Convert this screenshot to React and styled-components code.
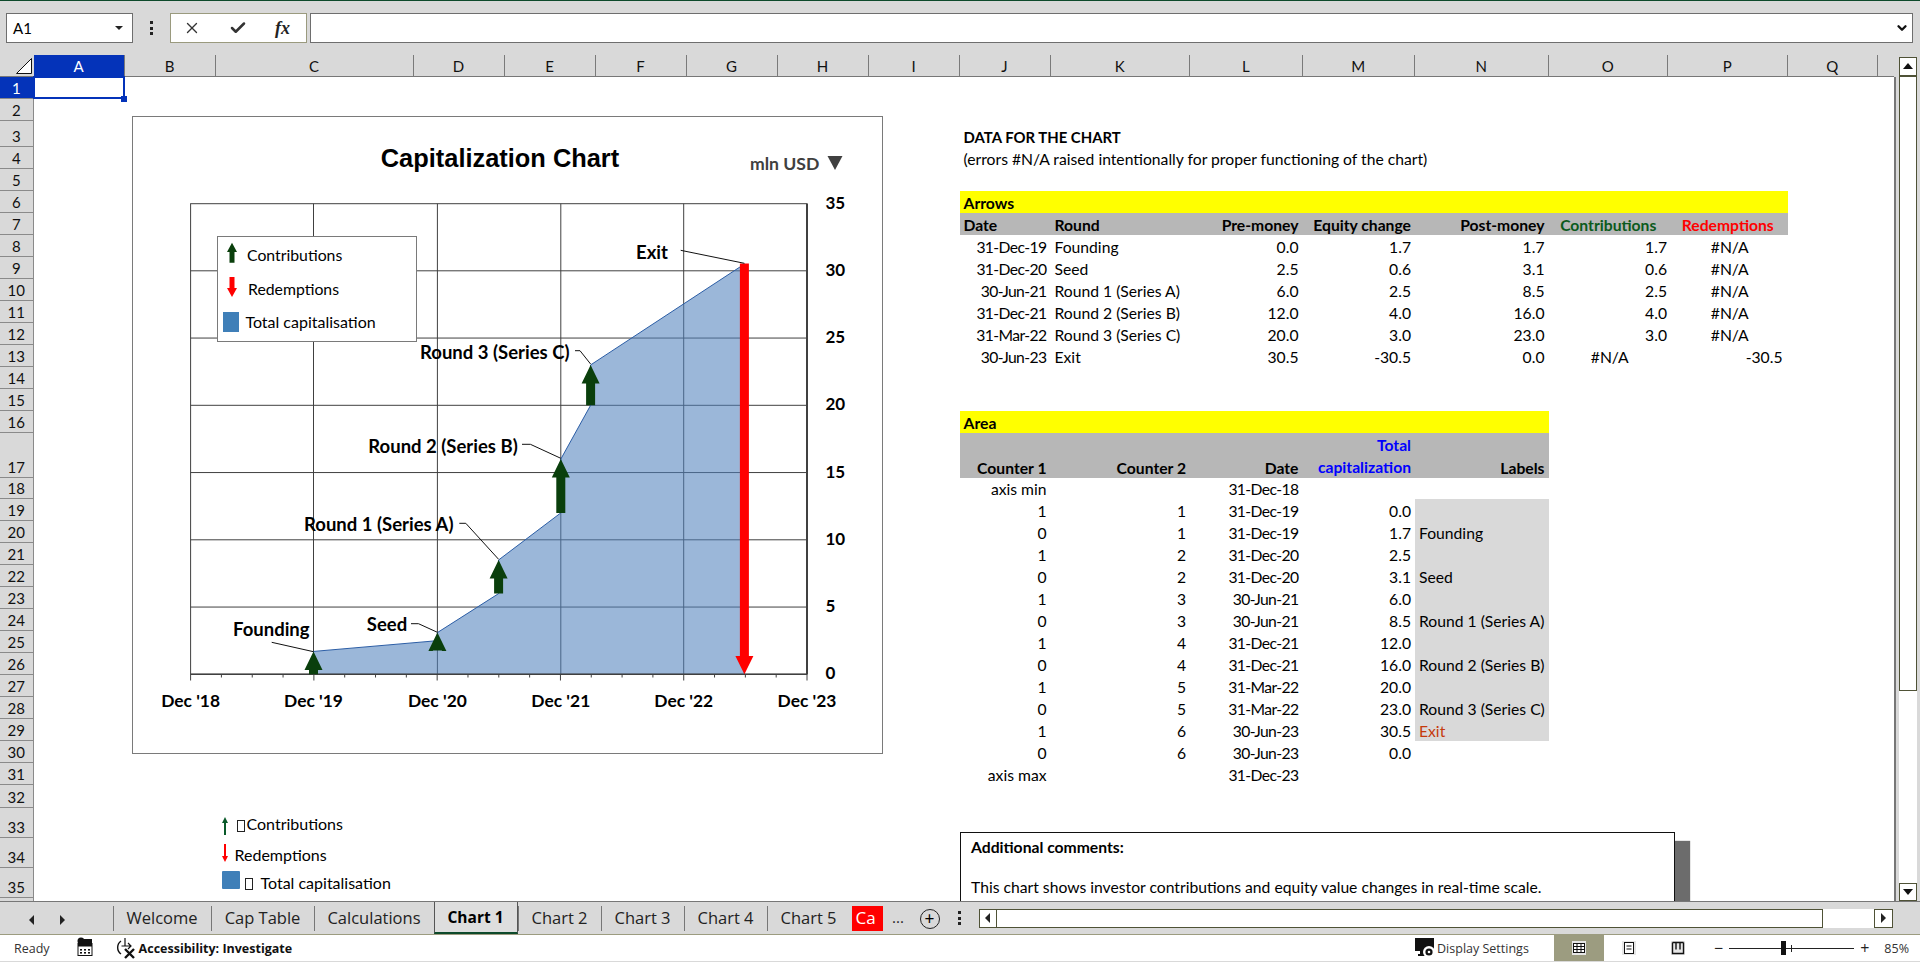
import React from 'react';
import styled, { createGlobalStyle } from 'styled-components';
import { X, Check, ChevronDown } from 'lucide-react';

const GlobalStyle = createGlobalStyle`
  html, body { margin: 0; padding: 0; height: 100%; overflow: hidden; background: #fff; }
  * { box-sizing: border-box; }
`;

const CELL_FONT = "Lato, 'Noto Sans', sans-serif";
const UI_FONT = "'Open Sans', 'Noto Sans', sans-serif";
const GREY = '#d9d9d9';
const BLUE = '#0433b9';
const OLIVE = '#4f5236';
const ARROW_GREEN = '#0a3f0c';

const COLS = [
  ['A', 91], ['B', 91], ['C', 198], ['D', 91], ['E', 91], ['F', 91], ['G', 91], ['H', 91], ['I', 91],
  ['J', 91], ['K', 139.5], ['L', 112.5], ['M', 112.5], ['N', 133.5], ['O', 119.5], ['P', 119.5], ['Q', 90.5], ['', 16.5],
];
const ROWS = [
  22, 22, 26, 22, 22, 22, 22,
  22, 22, 22, 22, 22, 22, 22, 22, 22,
  45, 21,
  22, 22, 22, 22, 22, 22, 22, 22, 22, 22, 22, 22, 22,
  22.5, 30, 30, 30, 5.5,
];
const colIndex = (letter) => COLS.findIndex((c) => c[0] === letter) + 2;

const Shell = styled.div`
  width: 1920px;
  height: 962px;
  display: flex;
  flex-direction: column;
  overflow: hidden;
  background: ${GREY};
  font-family: ${CELL_FONT};
  color: #000;
`;

const TopLine = styled.div`
  height: 1px;
  background: #0d4a2b;
`;

const FormulaBar = styled.div`
  height: 54px;
  display: flex;
  align-items: flex-start;
  padding: 12px 7px 0 6px;
`;

const NameBox = styled.div`
  width: 127px;
  height: 30px;
  background: #fff;
  border: 1px solid #6e6e6e;
  display: flex;
  align-items: center;
  justify-content: space-between;
  padding: 0 9px 0 6px;
  font-size: 15px;
`;

const Caret = styled.span`
  width: 0;
  height: 0;
  border-left: 4px solid transparent;
  border-right: 4px solid transparent;
  border-top: 4px solid #222;
`;

const VDots = styled.div`
  width: 37px;
  height: 30px;
  display: flex;
  flex-direction: column;
  align-items: center;
  justify-content: center;
  gap: 2.5px;
  span { width: 3px; height: 3px; background: #222; }
`;

const FxBox = styled.div`
  width: 137px;
  height: 30px;
  background: #fff;
  border: 1px solid #9a9a7e;
  display: flex;
  align-items: center;
  justify-content: space-between;
  padding: 0 16px 0 12px;
  color: #333;
`;

const FxGlyph = styled.span`
  font-family: 'Liberation Serif', serif;
  font-style: italic;
  font-weight: 700;
  font-size: 18px;
  color: #222;
`;

const FormulaInput = styled.div`
  flex: 1;
  height: 30px;
  margin-left: 3px;
  background: #fff;
  border: 1px solid #6e6e6e;
  display: flex;
  align-items: center;
  justify-content: flex-end;
  padding-right: 3px;
  color: #111;
`;

const SheetRow = styled.div`
  height: 848px;
  display: flex;
  border-bottom: 2px solid #777;
  margin-bottom: -1px;
`;

const SheetGrid = styled.div`
  position: relative;
  width: 1894px;
  display: grid;
  grid-template-columns: 33.5px ${COLS.map((c) => c[1] + 'px').join(' ')};
  grid-template-rows: 22px ${ROWS.map((r) => r + 'px').join(' ')};
  background: #fff;
  overflow: hidden;
`;

const Corner = styled.div`
  grid-column: 1;
  grid-row: 1;
  background: ${GREY};
  border-bottom: 1px solid #777;
  display: flex;
  align-items: flex-end;
  justify-content: flex-end;
  padding: 0 2px 2px 0;
`;

const ColHead = styled.div`
  grid-row: 1;
  grid-column: ${(p) => p.$col};
  background: ${(p) => (p.$active ? BLUE : GREY)};
  color: ${(p) => (p.$active ? '#fff' : '#111')};
  border-right: 1px solid #7a7a7a;
  border-bottom: 1px solid #777;
  display: flex;
  align-items: center;
  justify-content: center;
  font-size: 15px;
`;

const RowHead = styled.div`
  grid-column: 1;
  grid-row: ${(p) => p.$row + 1};
  background: ${(p) => (p.$active ? BLUE : GREY)};
  color: ${(p) => (p.$active ? '#fff' : '#111')};
  border-bottom: 1px solid #8a8a8a;
  border-right: 1px solid #8a8a8a;
  display: flex;
  align-items: flex-end;
  justify-content: center;
  line-height: 20px;
  font-size: 15px;
  overflow: hidden;
`;

const Cell = styled.div`
  grid-column: ${(p) => p.$col} / ${(p) => (p.$to ? p.$to + 1 : p.$col + 1)};
  grid-row: ${(p) => p.$row + 1};
  display: flex;
  align-items: flex-end;
  justify-content: ${(p) => (p.$align === 'right' ? 'flex-end' : p.$align === 'center' ? 'center' : 'flex-start')};
  padding: 0 ${(p) => p.$padR ?? 4}px 0 4px;
  min-width: 0;
  background: ${(p) => p.$bg || 'transparent'};
  color: ${(p) => p.$color || '#000'};
  font-weight: ${(p) => (p.$bold ? 700 : 400)};
  font-size: ${(p) => p.$size || 15.7}px;
  letter-spacing: ${(p) => (p.$date ? '-0.6px' : 'normal')};
  line-height: ${(p) => (p.$multi ? 22 : 20)}px;
  white-space: ${(p) => (p.$multi ? 'pre-line' : 'nowrap')};
  text-align: ${(p) => p.$align || 'left'};
`;

const LegendLine = styled.div`
  grid-column: ${colIndex('C')} / ${colIndex('E')};
  grid-row: ${(p) => p.$row + 1};
  display: flex;
  align-items: flex-end;
  padding: 0 0 ${(p) => p.$drop}px 6px;
  font-size: 16px;
  line-height: 20px;
  white-space: nowrap;
`;

const LegendText = styled.span`
  margin-left: ${(p) => p.$gap}px;
  margin-bottom: ${(p) => p.$lift || 0}px;
`;

const Tofu = styled.span`
  width: 8px;
  height: 12px;
  border: 1px solid #222;
  margin: 0 0 ${(p) => p.$lift}px ${(p) => p.$gap}px;
`;

const SelectedCell = styled.div`
  position: absolute;
  left: 33px;
  top: 21px;
  width: 92px;
  height: 23px;
  border: 2.5px solid ${BLUE};
  &::after {
    content: '';
    position: absolute;
    right: -4px;
    bottom: -5px;
    width: 6px;
    height: 6px;
    background: ${BLUE};
  }
`;

const ChartFrame = styled.div`
  position: absolute;
  left: 132px;
  top: 61px;
  width: 751px;
  height: 638px;
  background: #fff;
  border: 1px solid #7a7a7a;
  svg { display: block; }
`;

const CommentBox = styled.div`
  position: absolute;
  left: 960px;
  top: 777px;
  width: 715px;
  height: 200px;
  background: #fff;
  border: 1px solid #111;
  padding: 4px 10px;
  font-size: 15.7px;
  line-height: 20px;
  box-shadow: 15px 9px 1px #6c6c6c;
  p { margin: 0 0 20px; white-space: nowrap; }
  b { font-weight: 700; }
`;

const VScroll = styled.div`
  position: relative;
  width: 26px;
  padding: 2px 3px 0 4.5px;
  display: flex;
  flex-direction: column;
  background: ${GREY};
  &::before {
    content: '';
    position: absolute;
    left: 0;
    top: 22px;
    bottom: 0;
    width: 2px;
    background: #777;
  }
`;

const VTrack = styled.div`
  flex: 1;
  display: flex;
  flex-direction: column;
  background: #fff;
`;

const VGap = styled.div`
  flex: 1;
`;

const ScrollBtn = styled.div`
  width: 18.5px;
  height: ${(p) => p.$h || 18.5}px;
  background: #fff;
  border: 1.5px solid ${OLIVE};
  display: flex;
  align-items: center;
  justify-content: center;
  flex: none;
`;

const VThumb = styled.div`
  height: 615px;
  background: #fff;
  border: 1.5px solid ${OLIVE};
  flex: none;
`;

const Tri = styled.span`
  width: 0;
  height: 0;
  ${(p) => p.$dir === 'up' && `border-left: 5px solid transparent; border-right: 5px solid transparent; border-bottom: 6px solid #111;`}
  ${(p) => p.$dir === 'down' && `border-left: 5px solid transparent; border-right: 5px solid transparent; border-top: 6px solid #111;`}
  ${(p) => p.$dir === 'left' && `border-top: 5.5px solid transparent; border-bottom: 5.5px solid transparent; border-right: 5.5px solid #222;`}
  ${(p) => p.$dir === 'right' && `border-top: 5.5px solid transparent; border-bottom: 5.5px solid transparent; border-left: 5.5px solid #222;`}
`;

const TabBar = styled.div`
  height: 32px;
  display: flex;
  align-items: flex-start;
  background: ${GREY};
  font-family: ${UI_FONT};
`;

const NavArrows = styled.div`
  width: 112.5px;
  height: 32px;
  display: flex;
  align-items: center;
  gap: 26px;
  padding-left: 29px;
  padding-top: 3px;
`;

const Tab = styled.div`
  width: ${(p) => p.$w}px;
  height: ${(p) => (p.$active ? 32 : 25)}px;
  margin-top: ${(p) => (p.$active ? 0 : 3.5)}px;
  padding-bottom: ${(p) => (p.$active ? 0 : 2)}px;
  display: flex;
  align-items: center;
  justify-content: center;
  font-size: ${(p) => (p.$active ? 15.5 : 16.5)}px;
  font-weight: ${(p) => (p.$active ? 700 : 400)};
  color: #222;
  border-left: 1px solid #777;
  ${(p) => p.$active && `
    border-left: 1px solid #555;
    border-right: 1px solid #555;
    border-bottom: 2.5px solid #0d4a2b;
    background: #dedede;
    color: #000;
  `}
`;

const RedTab = styled.div`
  width: 31px;
  height: 25px;
  margin: 3.5px 0 0 2px;
  background: #ff0000;
  color: #fff;
  font-size: 17px;
  overflow: hidden;
  padding-left: 4px;
  line-height: 24px;
`;

const More = styled.div`
  width: 31px;
  height: 32px;
  text-align: center;
  line-height: 30px;
  font-size: 15px;
  color: #222;
`;

const AddSheet = styled.div`
  width: 20px;
  height: 20px;
  margin: 7px 0 0 6px;
  border: 1.5px solid #222;
  border-radius: 50%;
  display: flex;
  align-items: center;
  justify-content: center;
  font-family: ${CELL_FONT};
  font-size: 17px;
  line-height: 16px;
`;

const BarDots = styled(VDots)`
  width: 4px;
  margin-left: 18px;
  height: 32px;
`;

const HScroll = styled.div`
  margin: 7px 0 0 17px;
  width: 914px;
  height: 19px;
  display: flex;
  background: #fff;
`;

const HThumb = styled.div`
  width: 826px;
  border: 1.5px solid ${OLIVE};
  border-left: none;
`;

const HGap = styled.div`
  flex: 1;
`;

const StatusBar = styled.div`
  height: 27px;
  display: flex;
  align-items: center;
  background: #fff;
  border-top: 1.5px solid #9c9c80;
  font-family: ${UI_FONT};
  font-size: 12.5px;
  color: #333;
  padding-left: 14px;
`;

const StatusLeft = styled.div`
  display: flex;
  align-items: center;
`;

const StatusRight = styled.div`
  margin-left: auto;
  display: flex;
  align-items: center;
  height: 100%;
`;

const AccessText = styled.span`
  font-weight: 700;
  color: #111;
  font-size: 12.5px;
  margin-left: 2px;
  white-space: nowrap;
`;

const DisplayText = styled.span`
  width: 117px;
`;

const ViewBtn = styled.div`
  width: ${(p) => p.$w}px;
  height: 100%;
  display: flex;
  align-items: center;
  justify-content: center;
  background: ${(p) => (p.$active ? '#9c9c80' : 'transparent')};
`;

const ZoomSlider = styled.div`
  position: relative;
  width: 125px;
  height: 1px;
  background: #222;
  margin: 0 6px;
  &::before {
    content: '';
    position: absolute;
    left: 52px;
    top: -7px;
    width: 5px;
    height: 14px;
    background: #111;
  }
  &::after {
    content: '';
    position: absolute;
    left: 62px;
    top: -3px;
    width: 1px;
    height: 7px;
    background: #222;
  }
`;

const ZoomMark = styled.span`
  font-size: 16px;
  color: #222;
  line-height: 16px;
  margin-left: ${(p) => p.$left || 0}px;
`;

const ZoomValue = styled.span`
  margin: 0 11px 0 15px;
  font-size: 12.5px;
  color: #333;
`;

const LegendSwatch = styled.span`
  width: 18px;
  height: 18px;
  background: #3f7fb8;
  border-radius: 1px;
  margin-bottom: 6px;
`;

const SmallArrowSvg = styled.svg`
  margin-bottom: 3px;
  flex: none;
`;

const MacroSvg = styled.svg`
  margin: 0 0 3px 27px;
`;

const AccessSvg = styled.svg`
  margin-left: 22px;
`;

const DisplaySvg = styled.svg`
  margin-right: 1px;
`;

// ---- data ----
const arrowsRows = [
  ['31-Dec-19', 'Founding', '0.0', '1.7', '1.7', '1.7', '#N/A'],
  ['31-Dec-20', 'Seed', '2.5', '0.6', '3.1', '0.6', '#N/A'],
  ['30-Jun-21', 'Round 1 (Series A)', '6.0', '2.5', '8.5', '2.5', '#N/A'],
  ['31-Dec-21', 'Round 2 (Series B)', '12.0', '4.0', '16.0', '4.0', '#N/A'],
  ['31-Mar-22', 'Round 3 (Series C)', '20.0', '3.0', '23.0', '3.0', '#N/A'],
  ['30-Jun-23', 'Exit', '30.5', '-30.5', '0.0', '#N/A', '-30.5'],
];

const areaRows = [
  ['axis min', '', '31-Dec-18', '', ''],
  ['1', '1', '31-Dec-19', '0.0', ''],
  ['0', '1', '31-Dec-19', '1.7', 'Founding'],
  ['1', '2', '31-Dec-20', '2.5', ''],
  ['0', '2', '31-Dec-20', '3.1', 'Seed'],
  ['1', '3', '30-Jun-21', '6.0', ''],
  ['0', '3', '30-Jun-21', '8.5', 'Round 1 (Series A)'],
  ['1', '4', '31-Dec-21', '12.0', ''],
  ['0', '4', '31-Dec-21', '16.0', 'Round 2 (Series B)'],
  ['1', '5', '31-Mar-22', '20.0', ''],
  ['0', '5', '31-Mar-22', '23.0', 'Round 3 (Series C)'],
  ['1', '6', '30-Jun-23', '30.5', 'Exit'],
  ['0', '6', '30-Jun-23', '0.0', ''],
  ['axis max', '', '31-Dec-23', '', ''],
];

const tabs = [
  ['Welcome', 98], ['Cap Table', 103], ['Calculations', 120], ['Chart 1', 84],
  ['Chart 2', 83], ['Chart 3', 83], ['Chart 4', 83], ['Chart 5', 83],
];

// ---- chart, drawn in page coordinates ----
const yFor = (v) => 674.3 - v * 13.45;
const X_DEC = [190.6, 313.5, 437.4, 560.8, 683.7, 807];
const X_R1 = 498.6;
const X_R3 = 590.6;
const X_EXIT = 744.4;

const areaPoints = [
  [313.5, 0], [313.5, 1.7], [437.4, 2.5], [437.4, 3.1], [X_R1, 6], [X_R1, 8.5],
  [560.8, 12], [560.8, 16], [X_R3, 20], [X_R3, 23], [X_EXIT, 30.5], [X_EXIT, 0],
].map(([x, v]) => `${x},${yFor(v)}`).join(' ');

const UpArrow = ({ x, tip, bottom }) => (
  <polygon
    fill={ARROW_GREEN}
    points={`${x},${tip} ${x + 9},${tip + 18.5} ${x + 4.5},${tip + 18.5} ${x + 4.5},${bottom} ${x - 4.5},${bottom} ${x - 4.5},${tip + 18.5} ${x - 9},${tip + 18.5}`}
  />
);

const Leader = ({ points }) => <polyline points={points} fill="none" stroke="#111" strokeWidth="1" />;

const ChartLabel = ({ x, y, children }) => (
  <text x={x} y={y} fontFamily={CELL_FONT} fontWeight="700" fontSize="18.5" fill="#000">{children}</text>
);

const Chart = () => {
  const minor = [];
  for (let i = 0; i <= 20; i++) minor.push(190.6 + i * 30.82);
  return (
    <svg width="749" height="636" viewBox="133 117 749 636">
      <text x="500" y="167" textAnchor="middle" fontFamily="'Liberation Sans', sans-serif" fontWeight="700" fontSize="25.4" fill="#000">Capitalization Chart</text>
      <text x="750" y="170" fontFamily={CELL_FONT} fontWeight="700" fontSize="17.6" fill="#404040">mln USD</text>
      <polygon points="827.5,156 842.5,156 835,170" fill="#404040" />

      <rect x="190.6" y="203.7" width="616.4" height="470.6" fill="#fff" stroke="#404040" />
      {[5, 10, 15, 20, 25, 30].map((v) => (
        <line key={v} x1="190.6" x2="807" y1={yFor(v)} y2={yFor(v)} stroke="#404040" />
      ))}
      {X_DEC.slice(1, 5).map((x) => (
        <line key={x} x1={x} x2={x} y1="203.7" y2="674.3" stroke="#404040" />
      ))}

      <polygon points={areaPoints} fill="rgb(79,129,189)" fillOpacity="0.57" />
      <polyline points={areaPoints} fill="none" stroke="#2c5ea6" strokeWidth="1" />

      <line x1="807" x2="807" y1="203.7" y2="674.3" stroke="#404040" strokeWidth="2" />
      <line x1="190.6" x2="807" y1="674.3" y2="674.3" stroke="#404040" strokeWidth="1.5" />
      {minor.map((x, i) => (
        <line key={x} x1={x} x2={x} y1="674.3" y2={i % 4 === 0 ? 680.5 : 677.5} stroke="#404040" />
      ))}

      <UpArrow x={313.5} tip={651.4} bottom={674.3} />
      <UpArrow x={437.4} tip={632.6} bottom={650.5} />
      <UpArrow x={X_R1} tip={560} bottom={593.6} />
      <UpArrow x={560.8} tip={459.1} bottom={512.9} />
      <UpArrow x={X_R3} tip={365} bottom={405.3} />
      <polygon
        fill="#ff0000"
        points={`${X_EXIT - 4.5},263.5 ${X_EXIT + 4.5},263.5 ${X_EXIT + 4.5},656 ${X_EXIT + 9},656 ${X_EXIT},674.3 ${X_EXIT - 9},656 ${X_EXIT - 4.5},656`}
      />

      <Leader points="680.7,250.3 744.4,263.3" />
      <Leader points="575,350.7 580,350.7 590.6,364" />
      <Leader points="522,444.3 530.4,444.3 560.8,458.3" />
      <Leader points="459.3,523.3 465.8,523.3 498.6,559.3" />
      <Leader points="411,623.7 418.5,623.7 437.4,632.3" />
      <Leader points="271.7,642.3 313.5,651.7" />

      <ChartLabel x={636} y={258.5}>Exit</ChartLabel>
      <ChartLabel x={420} y={358.5}>Round 3 (Series C)</ChartLabel>
      <ChartLabel x={368.3} y={453}>Round 2 (Series B)</ChartLabel>
      <ChartLabel x={304} y={530.5}>Round 1 (Series A)</ChartLabel>
      <ChartLabel x={366.8} y={630.5}>Seed</ChartLabel>
      <ChartLabel x={233} y={635.5}>Founding</ChartLabel>

      <rect x="217.5" y="236.5" width="199" height="105" fill="#fff" stroke="#7a7a7a" />
      <polygon fill={ARROW_GREEN} points="232,242.7 237,252 234.5,252 234.5,262.7 229.5,262.7 229.5,252 227,252" />
      <polygon fill="#ff0000" points="232,297 237,288 234.5,288 234.5,277 229.5,277 229.5,288 227,288" />
      <rect x="223" y="312" width="16" height="20" fill="#3f7fb8" />
      <text x="247" y="261" fontFamily={CELL_FONT} fontSize="15.8" fill="#000">Contributions</text>
      <text x="248" y="295" fontFamily={CELL_FONT} fontSize="15.8" fill="#000">Redemptions</text>
      <text x="245.4" y="328" fontFamily={CELL_FONT} fontSize="16" fill="#000">Total capitalisation</text>

      {[0, 5, 10, 15, 20, 25, 30, 35].map((v) => (
        <text key={v} x="825.5" y={yFor(v) + 5} fontFamily={CELL_FONT} fontWeight="700" fontSize="17" fill="#000">{v}</text>
      ))}
      {["Dec '18", "Dec '19", "Dec '20", "Dec '21", "Dec '22", "Dec '23"].map((t, i) => (
        <text key={t} x={X_DEC[i]} y="706.5" textAnchor="middle" fontFamily={CELL_FONT} fontWeight="700" fontSize="17.4" fill="#000">{t}</text>
      ))}
    </svg>
  );
};

const SmallArrow = ({ color, down }) => (
  <SmallArrowSvg width="6" height="18" viewBox="0 0 6 18">
    <polygon fill={color} points={down ? '3,18 6,12 4,12 4,0 2,0 2,12 0,12' : '3,0 6,6 4,6 4,18 2,18 2,6 0,6'} />
  </SmallArrowSvg>
);

const MacroIcon = () => (
  <MacroSvg width="16" height="20" viewBox="0 0 16 20">
    <circle cx="4" cy="4" r="3.5" fill="#111" />
    <rect x="7" y="2" width="8" height="4" fill="#111" />
    <rect x="1" y="6.5" width="14" height="12" fill="#fff" stroke="#111" />
    <rect x="1" y="6.5" width="14" height="3" fill="#111" />
    {[4, 8, 12].map((x) => [12, 15].map((y) => <rect key={x + '-' + y} x={x - 1} y={y} width="2" height="1.6" fill="#111" />))}
  </MacroSvg>
);

const AccessIcon = () => (
  <AccessSvg width="22" height="22" viewBox="0 0 22 22">
    <path d="M6 4 A8 8 0 0 0 6 17" fill="none" stroke="#111" strokeWidth="1.4" />
    <path d="M10 1 V9 M6.5 9 H16 M13 6 L16 9 L13 12" fill="none" stroke="#111" strokeWidth="1.2" />
    <path d="M10 12 L19 21 M19 12 L10 21" stroke="#111" strokeWidth="2.4" />
  </AccessSvg>
);

const DisplayIcon = () => (
  <DisplaySvg width="21" height="22" viewBox="0 0 21 22">
    <rect x="0" y="1" width="19" height="13" fill="#111" />
    <rect x="5" y="14" width="6" height="3" fill="#111" />
    <rect x="3" y="17" width="10" height="2" fill="#111" />
    <circle cx="14" cy="15" r="6" fill="#fff" />
    <circle cx="14" cy="15" r="3.6" fill="#111" />
    <circle cx="14" cy="15" r="1.3" fill="#fff" />
  </DisplaySvg>
);

const GridViewIcon = () => (
  <svg width="14" height="14" viewBox="0 0 14 14">
    <rect x="0" y="0" width="14" height="14" fill="#e6e6e6" />
    <rect x="1.5" y="2.5" width="11" height="9" fill="#fff" stroke="#111" />
    <path d="M1.5 5.5 H12.5 M1.5 8.5 H12.5 M5 2.5 V11.5 M9 2.5 V11.5" stroke="#111" />
  </svg>
);

const PageViewIcon = () => (
  <svg width="14" height="14" viewBox="0 0 14 14">
    <rect x="0" y="0" width="14" height="14" fill="#e6e6e6" />
    <rect x="2.5" y="1.5" width="9" height="11" fill="#fff" stroke="#111" />
    <path d="M4.5 5 H9.5 M4.5 8 H9.5" stroke="#111" />
  </svg>
);

const BreakViewIcon = () => (
  <svg width="14" height="14" viewBox="0 0 14 14">
    <rect x="0" y="0" width="14" height="14" fill="#e6e6e6" />
    <path d="M1.5 1.5 V12.5 H12.5 V1.5 M5 1.5 V8.5 M9 1.5 V8.5 M1.5 1.5 H12.5" fill="none" stroke="#111" strokeWidth="1.4" />
  </svg>
);

const App = () => {
  const J = colIndex('J');
  const K = colIndex('K');
  const L = colIndex('L');
  const M = colIndex('M');
  const N = colIndex('N');
  const O = colIndex('O');
  const P = colIndex('P');

  return (
    <Shell>
      <GlobalStyle />
      <TopLine />
      <FormulaBar>
        <NameBox>A1<Caret /></NameBox>
        <VDots><span /><span /><span /></VDots>
        <FxBox>
          <X size={18} strokeWidth={1.8} />
          <Check size={18} strokeWidth={3.4} />
          <FxGlyph>fx</FxGlyph>
        </FxBox>
        <FormulaInput><ChevronDown size={14} strokeWidth={4} /></FormulaInput>
      </FormulaBar>

      <SheetRow>
        <SheetGrid>
          <Corner>
            <svg width="16" height="16" viewBox="0 0 16 16">
              <polygon points="15.5,0.5 15.5,15.5 0.5,15.5" fill="#fff" stroke="#111" />
            </svg>
          </Corner>
          {COLS.map(([name], i) => (
            <ColHead key={i} $col={i + 2} $active={name === 'A'}>{name}</ColHead>
          ))}
          {ROWS.map((_, i) => (
            <RowHead key={i} $row={i + 1} $active={i === 0}>{i < 35 ? i + 1 : ''}</RowHead>
          ))}

          <Cell $col={J} $row={3} $bold $size={14.9}>DATA FOR THE CHART</Cell>
          <Cell $col={J} $row={4}>(errors #N/A raised intentionally for proper functioning of the chart)</Cell>

          <Cell $col={J} $to={P} $row={6} $bg="#ffff00" $bold>Arrows</Cell>
          <Cell $col={J} $row={7} $bg="#b7b7b7" $bold>Date</Cell>
          <Cell $col={K} $row={7} $bg="#b7b7b7" $bold>Round</Cell>
          <Cell $col={L} $row={7} $bg="#b7b7b7" $bold $align="right">Pre-money</Cell>
          <Cell $col={M} $row={7} $bg="#b7b7b7" $bold $align="right">Equity change</Cell>
          <Cell $col={N} $row={7} $bg="#b7b7b7" $bold $align="right">Post-money</Cell>
          <Cell $col={O} $row={7} $bg="#b7b7b7" $bold $align="center" $color="#0b5a1c">Contributions</Cell>
          <Cell $col={P} $row={7} $bg="#b7b7b7" $bold $align="center" $color="#ff0000">Redemptions</Cell>
          {arrowsRows.map((r, i) => (
            <React.Fragment key={i}>
              <Cell $col={J} $row={8 + i} $align="right" $date>{r[0]}</Cell>
              <Cell $col={K} $row={8 + i}>{r[1]}</Cell>
              <Cell $col={L} $row={8 + i} $align="right">{r[2]}</Cell>
              <Cell $col={M} $row={8 + i} $align="right">{r[3]}</Cell>
              <Cell $col={N} $row={8 + i} $align="right">{r[4]}</Cell>
              <Cell $col={O} $row={8 + i} $align={r[5] === '#N/A' ? 'center' : 'right'} $padR={1}>{r[5]}</Cell>
              <Cell $col={P} $row={8 + i} $align={r[6] === '#N/A' ? 'center' : 'right'} $padR={r[6] === '#N/A' ? 0 : 5}>{r[6]}</Cell>
            </React.Fragment>
          ))}

          <Cell $col={J} $to={N} $row={16} $bg="#ffff00" $bold>Area</Cell>
          <Cell $col={J} $row={17} $bg="#b7b7b7" $bold $align="right">Counter 1</Cell>
          <Cell $col={K} $row={17} $bg="#b7b7b7" $bold $align="right">Counter 2</Cell>
          <Cell $col={L} $row={17} $bg="#b7b7b7" $bold $align="right">Date</Cell>
          <Cell $col={M} $row={17} $bg="#b7b7b7" $bold $align="right" $color="#0000ff" $multi>{'Total\ncapitalization'}</Cell>
          <Cell $col={N} $row={17} $bg="#b7b7b7" $bold $align="right">Labels</Cell>
          {areaRows.map((r, i) => {
            const row = 18 + i;
            const inLabels = row >= 19 && row <= 29;
            return (
              <React.Fragment key={i}>
                <Cell $col={J} $row={row} $align="right">{r[0]}</Cell>
                <Cell $col={K} $row={row} $align="right">{r[1]}</Cell>
                <Cell $col={L} $row={row} $align="right" $date>{r[2]}</Cell>
                <Cell $col={M} $row={row} $align="right">{r[3]}</Cell>
                <Cell $col={N} $row={row} $bg={inLabels ? GREY : undefined} $color={r[4] === 'Exit' ? '#c53a0c' : undefined}>{r[4]}</Cell>
              </React.Fragment>
            );
          })}

          <LegendLine $row={33} $drop={0}>
            <SmallArrow color="#0a5a2a" />
            <Tofu $gap={9} $lift={6} />
            <LegendText $gap={2} $lift={4}>Contributions</LegendText>
          </LegendLine>
          <LegendLine $row={34} $drop={3}>
            <SmallArrow color="#ff0000" down />
            <LegendText $gap={7}>Redemptions</LegendText>
          </LegendLine>
          <LegendLine $row={35} $drop={3}>
            <LegendSwatch />
            <Tofu $gap={5} $lift={5} />
            <LegendText $gap={8} $lift={2}>Total capitalisation</LegendText>
          </LegendLine>

          <SelectedCell />
          <ChartFrame><Chart /></ChartFrame>
          <CommentBox>
            <p><b>Additional comments:</b></p>
            <p>This chart shows investor contributions and equity value changes in real-time scale.</p>
          </CommentBox>
        </SheetGrid>

        <VScroll>
          <ScrollBtn><Tri $dir="up" /></ScrollBtn>
          <VTrack>
            <VThumb />
            <VGap />
          </VTrack>
          <ScrollBtn><Tri $dir="down" /></ScrollBtn>
        </VScroll>
      </SheetRow>

      <TabBar>
        <NavArrows><Tri $dir="left" /><Tri $dir="right" /></NavArrows>
        {tabs.map(([name, w]) => (
          <Tab key={name} $w={w} $active={name === 'Chart 1'}>{name}</Tab>
        ))}
        <RedTab>Ca</RedTab>
        <More>...</More>
        <AddSheet>+</AddSheet>
        <BarDots><span /><span /><span /></BarDots>
        <HScroll>
          <ScrollBtn><Tri $dir="left" /></ScrollBtn>
          <HThumb />
          <HGap />
          <ScrollBtn><Tri $dir="right" /></ScrollBtn>
        </HScroll>
      </TabBar>

      <StatusBar>
        <StatusLeft>
          Ready
          <MacroIcon />
          <AccessIcon />
          <AccessText>Accessibility: Investigate</AccessText>
        </StatusLeft>
        <StatusRight>
          <DisplayIcon />
          <DisplayText>Display Settings</DisplayText>
          <ViewBtn $w={50} $active><GridViewIcon /></ViewBtn>
          <ViewBtn $w={50}><PageViewIcon /></ViewBtn>
          <ViewBtn $w={48}><BreakViewIcon /></ViewBtn>
          <ZoomMark $left={12}>−</ZoomMark>
          <ZoomSlider />
          <ZoomMark>+</ZoomMark>
          <ZoomValue>85%</ZoomValue>
        </StatusRight>
      </StatusBar>
    </Shell>
  );
};

export default App;
